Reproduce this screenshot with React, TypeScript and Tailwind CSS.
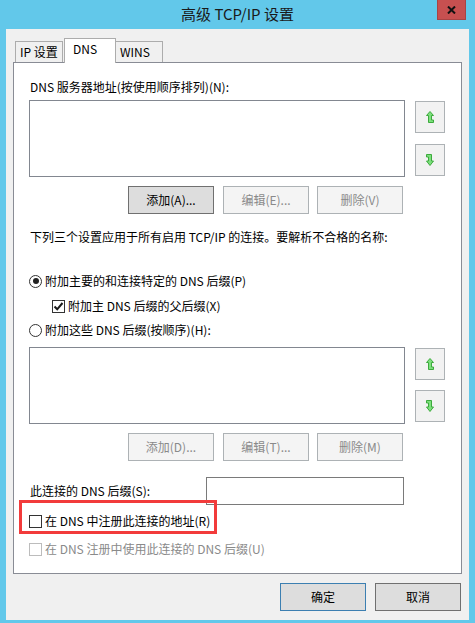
import React from "react"

// 按钮
function Btn({ label, disabled, primary, className = "" }: { label: string; disabled?: boolean; primary?: boolean; className?: string }) {
  const tone = disabled
    ? "bg-[#F4F4F4] border-[#ADB2B5] text-[#8A8A8A]"
    : primary
      ? "bg-[#DDDDDD] border-[#3C7FB1] text-black"
      : "bg-[#DDDDDD] border-[#707070] text-black"

  return (
    <div className={`w-[86px] h-[28px] border flex items-center justify-center ${tone} ${className}`}>
      {label}
    </div>
  )
}

function UpIcon() {
  return (
    <svg width="8" height="12" viewBox="0 0 8 12">
      <polygon
        points="4,0.5 7.5,4.5 5.5,4.5 5.5,9 7.5,9 7.5,11.5 2.5,11.5 2.5,4.5 0.5,4.5"
        fill="#7DE07D"
        stroke="#3DAA3D"
        strokeWidth="1"
      />
    </svg>
  )
}

function DownIcon() {
  return (
    <svg width="8" height="12" viewBox="0 0 8 12">
      <polygon
        points="0.5,0.5 5.5,0.5 5.5,7 7.5,7 4,11.5 0.5,7 2.5,7 2.5,3 0.5,3"
        fill="#7DE07D"
        stroke="#3DAA3D"
        strokeWidth="1"
      />
    </svg>
  )
}

function ArrowBtn({ down, className = "" }: { down?: boolean; className?: string }) {
  return (
    <div className={`w-[30px] h-[32px] border border-[#ADB2B5] bg-[#F2F2F2] flex items-center justify-center ${className}`}>
      {down ? <DownIcon /> : <UpIcon />}
    </div>
  )
}

function Radio({ checked }: { checked?: boolean }) {
  return (
    <div className="w-[13px] h-[13px] rounded-full border border-[#333333] bg-white flex items-center justify-center shrink-0">
      {checked && <div className="w-[6px] h-[6px] rounded-full bg-[#222222]" />}
    </div>
  )
}

function Check({ checked, disabled }: { checked?: boolean; disabled?: boolean }) {
  return (
    <div
      className={`w-[13px] h-[13px] border bg-white flex items-center justify-center shrink-0 ${
        disabled ? "border-[#BCBCBC]" : "border-[#333333]"
      }`}
    >
      {checked && (
        <svg width="11" height="11" viewBox="0 0 11 11">
          <path d="M1.5 5.5 L4.2 8.3 L9.5 2" fill="none" stroke="#1A1A1A" strokeWidth="2" />
        </svg>
      )}
    </div>
  )
}

// 列表 + 上下按钮
function ListSection({ className = "", gap }: { className?: string; gap: string }) {
  return (
    <div className={`flex ${className}`}>
      <div className="w-[376px] h-[77px] border border-[#828790] bg-white" />
      <div className="ml-[10px] flex flex-col">
        <ArrowBtn className="mt-[1px]" />
        <ArrowBtn down className={gap} />
      </div>
    </div>
  )
}

export default function App() {
  return (
    <div className="w-[475px] h-[623px] bg-[#62C8EA] relative flex flex-col [font-family:'Noto_Sans_CJK_SC','Noto_Sans',sans-serif] text-[12px] leading-[16px] text-black select-none">

      {/* TITLE */}
      <div className="h-[29px] flex items-center justify-center">
        <span className="text-[15px] leading-[20px] text-[#1A1A1A] -mt-[1px]">高级 TCP/IP 设置</span>
      </div>

      {/* CLOSE */}
      <div className="absolute left-[437px] top-0 w-[29px] h-[20px] bg-[#C75050] border border-[#A84444] border-t-0 flex items-center justify-center">
        <svg width="9" height="8" viewBox="0 0 9 8">
          <path d="M1 0.5 L8 7.5 M8 0.5 L1 7.5" stroke="#111111" strokeWidth="2" />
        </svg>
      </div>

      {/* CLIENT */}
      <div className="ml-[6px] w-[463px] h-[591px] bg-[#F0F0F0] px-[7px] pt-[9px] flex flex-col">

        {/* TABS */}
        <div className="flex items-end h-[24px] pl-[2px]">
          <div className="w-[48px] h-[21px] border border-b-0 border-[#ACACAC] bg-[#F0F0F0] pl-[4px] flex items-center">
            IP 设置
          </div>
          <div className="ml-[1px] w-[52px] h-[25px] -mb-px relative z-10 border border-b-0 border-[#ACACAC] bg-white pl-[8px] pt-[2px]">
            DNS
          </div>
          <div className="w-[47px] h-[21px] border border-l-0 border-b-0 border-[#ACACAC] bg-[#F0F0F0] pl-[4px] flex items-center">
            WINS
          </div>
        </div>

        {/* PANEL */}
        <div className="w-[449px] h-[512px] border border-[#898C95] bg-white pl-[15px] flex flex-col">

          <div className="mt-[16px] ml-[1px] h-[16px]">DNS 服务器地址(按使用顺序排列)(N):</div>

          <ListSection className="mt-[5px]" gap="mt-[11px]" />

          <div className="mt-[9px] pl-[99px] flex">
            <Btn label="添加(A)..." />
            <Btn label="编辑(E)..." disabled className="ml-[9px]" />
            <Btn label="删除(V)" disabled className="ml-[8px]" />
          </div>

          <div className="mt-[15px] ml-[1px] h-[16px]">下列三个设置应用于所有启用 TCP/IP 的连接。要解析不合格的名称:</div>

          <div className="mt-[28px] h-[16px] flex items-center">
            <Radio checked />
            <span className="ml-[3px]">附加主要的和连接特定的 DNS 后缀(P)</span>
          </div>

          <div className="mt-[9px] h-[16px] pl-[23px] flex items-center">
            <Check checked />
            <span className="ml-[3px]">附加主 DNS 后缀的父后缀(X)</span>
          </div>

          <div className="mt-[8px] h-[16px] flex items-center">
            <Radio />
            <span className="ml-[3px]">附加这些 DNS 后缀(按顺序)(H):</span>
          </div>

          <ListSection className="mt-[9px]" gap="mt-[10px]" />

          <div className="mt-[9px] pl-[99px] flex">
            <Btn label="添加(D)..." disabled />
            <Btn label="编辑(T)..." disabled className="ml-[9px]" />
            <Btn label="删除(M)" disabled className="ml-[8px]" />
          </div>

          <div className="mt-[16px] h-[28px] flex items-center">
            <span className="ml-[1px] w-[176px]">此连接的 DNS 后缀(S):</span>
            <div className="w-[198px] h-[28px] border border-[#7A7A7A] bg-white" />
          </div>

          <div className="mt-[8px] h-[16px] flex items-center">
            <Check />
            <span className="ml-[3px]">在 DNS 中注册此连接的地址(R)</span>
          </div>

          <div className="mt-[12px] h-[16px] flex items-center">
            <Check disabled />
            <span className="ml-[3px] text-[#8A8A8A]">在 DNS 注册中使用此连接的 DNS 后缀(U)</span>
          </div>

        </div>

        {/* OK / CANCEL */}
        <div className="mt-[9px] flex justify-end pr-[1px]">
          <Btn label="确定" primary />
          <Btn label="取消" className="ml-[9px]" />
        </div>

      </div>

      {/* RED MARK */}
      <div className="absolute left-[19px] top-[500px] w-[198px] h-[34px] border-[3px] border-[#F23B3B]" />

    </div>
  )
}
